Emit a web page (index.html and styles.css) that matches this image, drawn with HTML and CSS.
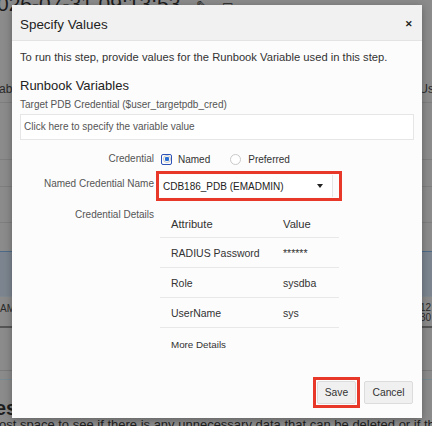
FILE: index.html
```html
<!DOCTYPE html>
<html>
<head>
<meta charset="utf-8">
<link rel="stylesheet" href="styles.css">
</head>
<body>
<div class="page">
  <div class="bg-top">026-07-31 09:13:53 <span class="bg-ico">✎</span> <span class="bg-ico2">▣</span></div>
  <div class="bg-row bg-r1"><span>aba</span><span>Us</span></div>
  <div class="bg-row bg-r2"></div>
  <div class="bg-row bg-r3"></div>
  <div class="bg-row bg-r4"></div>
  <div class="bg-row bg-r4b"></div>
  <div class="bg-band"></div>
  <div class="bg-row bg-r5"><span>AM</span><span class="bg-num">12<br>30</span></div>
  <div class="bg-row bg-r6"></div>
  <div class="bg-row bg-r7"></div>
  <div class="bg-head">es</div>
  <div class="bg-text">ost space to see if there is any unnecessary data that can be deleted or if the table itself</div>
</div>

<div class="dialog">
  <div class="dlg-header">
    <span class="dlg-title">Specify Values</span>
    <span class="dlg-close">✕</span>
  </div>
  <div class="dlg-body">
    <p class="intro">To run this step, provide values for the Runbook Variable used in this step.</p>
    <h2 class="section">Runbook Variables</h2>
    <div class="var-label">Target PDB Credential ($user_targetpdb_cred)</div>
    <div class="var-input">Click here to specify the variable value</div>

    <div class="form">
      <div class="lbl">Credential</div>
      <div class="radios">
        <span class="radio-focus"><span class="radio checked"></span></span>
        <span class="radio-text">Named</span>
        <span class="radio"></span>
        <span class="radio-text">Preferred</span>
      </div>

      <div class="lbl">Named Credential Name</div>
      <div class="select-wrap">
        <div class="select">
          <span>CDB186_PDB (EMADMIN)</span>
          <span class="caret"></span>
        </div>
      </div>

      <div class="lbl lbl-top">Credential Details</div>
      <div class="details">
        <div class="trow thead"><span>Attribute</span><span>Value</span></div>
        <div class="trow"><span>RADIUS Password</span><span>******</span></div>
        <div class="trow"><span>Role</span><span>sysdba</span></div>
        <div class="trow"><span>UserName</span><span>sys</span></div>
        <div class="more">More Details</div>
      </div>
    </div>
  </div>
  <div class="dlg-footer">
    <div class="save-wrap"><button class="btn btn-save">Save</button></div>
    <button class="btn btn-cancel">Cancel</button>
  </div>
</div>
</body>
</html>
```

FILE: styles.css
```css
* { box-sizing: border-box; }
html, body { margin: 0; padding: 0; }
body {
  width: 432px;
  height: 426px;
  overflow: hidden;
  position: relative;
  background: #8b8b8b;
  font-family: "Liberation Sans", Arial, sans-serif;
  color: #333;
}

/* dimmed background page */
.page { width: 432px; height: 426px; overflow: hidden; }
.bg-top {
  height: 20px;
  margin-top: -6px;
  margin-left: -3px;
  font-size: 21px;
  line-height: 20px;
  color: #1c1c1c;
  white-space: nowrap;
}
.bg-ico { font-size: 14px; margin-left: 10px; }
.bg-ico2 { font-size: 12px; margin-left: 8px; }
.bg-row {
  display: flex;
  justify-content: space-between;
  border-bottom: 1px solid #7e7e7e;
  font-size: 12px;
  color: #2a2a2a;
}
.bg-r1 { height: 89px; align-items: flex-end; padding-bottom: 6px; margin-left: -1px; margin-right: -2px; }
.bg-r2 { height: 57px; }
.bg-r3 { height: 27px; }
.bg-r4 { height: 36px; }
.bg-r4b { height: 29px; border-bottom: 1px solid #4d6b88; }
.bg-band { height: 45px; background: #7c858f; border-bottom: 1px solid #80898f; }
.bg-r5 {
  height: 31px;
  border-bottom: 2px solid #555;
  font-size: 10px;
  align-items: flex-start;
  padding-top: 6px;
}
.bg-num { line-height: 10px; padding-right: 1px; }
.bg-r6 { height: 43px; border-bottom: 1px solid #7a7a7a; }
.bg-r7 { height: 9px; border-bottom: 1px solid #7a8a93; }
.bg-head {
  font-size: 20px;
  font-weight: bold;
  color: #1e1e1e;
  margin-left: -5px;
  line-height: 20px;
  margin-top: 18px;
}
.bg-text {
  font-size: 13px;
  color: #1e1e1e;
  white-space: nowrap;
  line-height: 14px;
  margin-left: -1px;
}

/* dialog */
.dialog {
  position: absolute;
  left: 12px;
  top: 5px;
  width: 410px;
  height: 413px;
  background: #fcfcfc;
  box-shadow: 0 2px 8px rgba(0,0,0,0.3);
  display: flex;
  flex-direction: column;
}
.dlg-header {
  height: 36px;
  flex: none;
  background: #f1f1f1;
  border-bottom: 1px solid #e3e3e3;
  display: flex;
  align-items: center;
  justify-content: space-between;
  padding: 3px 9px 0 8px;
}
.dlg-title { font-size: 13.4px; color: #222; }
.dlg-close { font-size: 9px; color: #222; font-weight: bold; }

.dlg-body { padding: 0 8px; flex: 1; }
.intro { margin: 9px 0 0; font-size: 11.2px; line-height: 14px; color: #333; }
.section {
  margin: 13px 0 0;
  font-size: 13px;
  font-weight: normal;
  color: #222;
  line-height: 18px;
}
.var-label { margin-top: 3px; font-size: 10px; color: #555; line-height: 13px; }
.var-input {
  margin-top: 3px;
  height: 26px;
  border: 1px solid #e6e6e6;
  background: #fff;
  font-size: 10px;
  color: #555;
  padding-left: 3px;
  line-height: 24px;
  width: 394px;
}

.form {
  display: grid;
  grid-template-columns: 134px 1fr;
  column-gap: 2px;
  margin-top: 11px;
  font-size: 10px;
}
.lbl {
  text-align: right;
  color: #555;
  align-self: center;
  font-size: 10px;
  line-height: 12px;
}
.lbl-top { align-self: start; margin-top: 8px; }
.radios {
  display: flex;
  align-items: center;
  height: 16px;
  padding-left: 5px;
}
.radio-focus {
  width: 11px;
  height: 11px;
  border: 1.5px solid #2d52b8;
  border-radius: 2px;
  display: flex;
  align-items: center;
  justify-content: center;
}
.radio {
  width: 11px;
  height: 11px;
  border-radius: 50%;
  border: 1px solid #c9c9c9;
  background: #fff;
  display: inline-block;
}
.radio.checked {
  width: 8px;
  height: 8px;
  border: 1px solid #c4c4c4;
  background: radial-gradient(circle, #2a6fd4 0 2px, #fff 2.5px);
}
.radio-text { margin-left: 6px; margin-right: 20px; color: #333; font-size: 10px; }
.radio-text:last-child { margin-left: 7px; }

.select-wrap {
  margin-top: 4px;
  width: 186px;
  height: 30px;
  border: 3px solid #e8382a;
  padding: 1px 0 1px 1px;
}
.select {
  height: 100%;
  background: #fff;
  border-right: 1px solid #e5e5e5;
  margin-right: 6px;
  display: flex;
  align-items: center;
  justify-content: space-between;
  padding: 0 9px 0 3px;
  font-size: 10px;
  color: #222;
}
.caret {
  width: 0;
  height: 0;
  border-left: 3px solid transparent;
  border-right: 3px solid transparent;
  border-top: 4px solid #222;
}

.details { width: 179px; margin-top: 10px; margin-left: 4px; }
.trow {
  display: grid;
  grid-template-columns: 112px 1fr;
  height: 30px;
  align-items: center;
  padding-left: 11px;
  border-bottom: 1px solid #e8e8e8;
  color: #333;
  font-size: 10.5px;
}
.thead {
  height: 27px;
  align-items: start;
  font-size: 11.2px;
  line-height: 14px;
  padding-top: 6px;
}
.more { padding-left: 11px; margin-top: 11px; font-size: 9.8px; line-height: 12px; color: #333; }

.dlg-footer {
  flex: none;
  display: flex;
  justify-content: flex-end;
  align-items: center;
  gap: 4px;
  padding: 0 9px 10px 0;
}
.save-wrap {
  border: 3px solid #e8382a;
  padding: 1px;
}
.btn {
  font-family: "Liberation Sans", Arial, sans-serif;
  font-size: 10.3px;
  color: #333;
  background: #f0f0f0;
  border: 1px solid #dcdcdc;
  border-radius: 2px;
  height: 23px;
  padding: 0;
  margin: 0;
  display: block;
  text-align: center;
}
.btn-save { width: 39px; }
.btn-cancel { width: 49px; }
```
